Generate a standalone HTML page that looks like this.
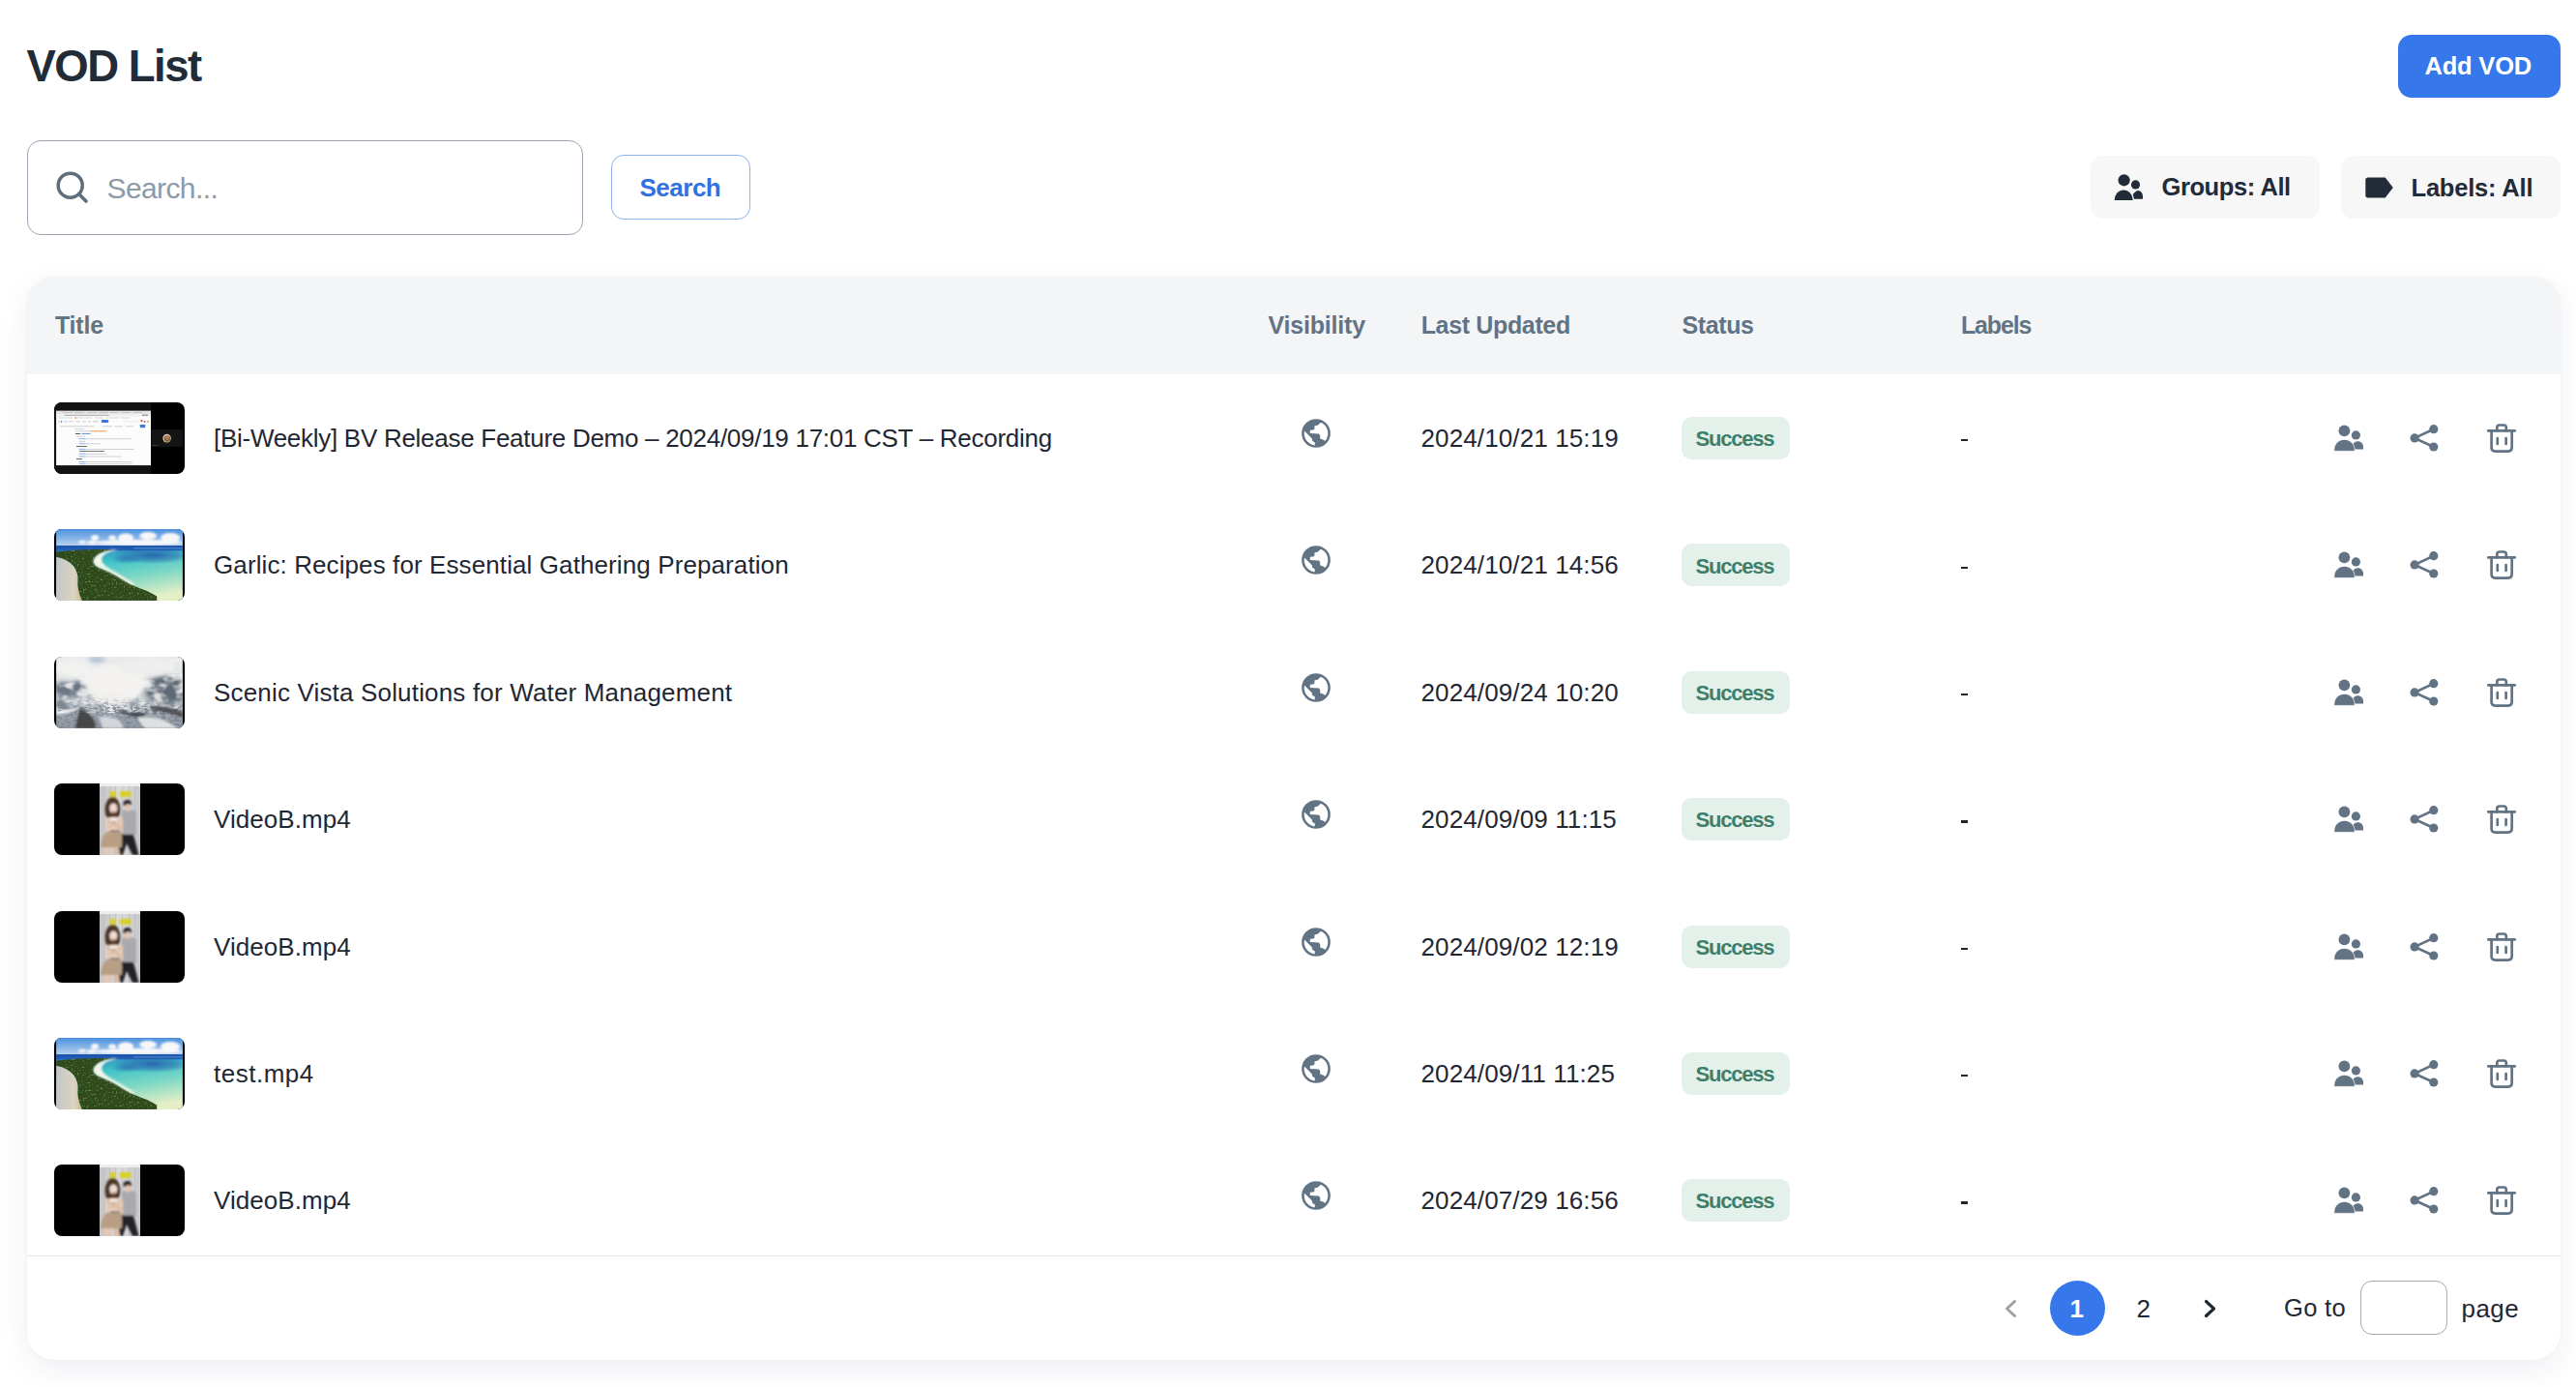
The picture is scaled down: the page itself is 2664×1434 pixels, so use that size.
<!DOCTYPE html>
<html><head><meta charset="utf-8"><title>VOD List</title>
<style>
html,body{margin:0;padding:0;}
body{width:2664px;height:1434px;position:relative;overflow:hidden;background:#ffffff;font-family:"Liberation Sans",sans-serif;}
.t{position:absolute;white-space:pre;}
.box{position:absolute;}
.card{box-shadow:0 10px 30px rgba(30,45,90,0.075), 0 0 2px rgba(30,45,90,0.05);}
</style></head><body>

<svg width="0" height="0" style="position:absolute">
<defs>
 <clipPath id="tclip"><rect x="0" y="0" width="135" height="74" rx="8" ry="8"/></clipPath>
 <clipPath id="gin"><circle cx="16" cy="16" r="12.3"/></clipPath>
 <g id="globe">
   <circle cx="16" cy="16" r="14.85" fill="#627384"/>
   <g clip-path="url(#gin)" fill="#ffffff">
     <path d="M20.2 5.2 L18.6 7 L16.8 7.9 L14.5 8.2 L14.4 11.6 L13.2 12.5 L9.8 12.8 L9.8 16.1 L18.9 16.4 L20.2 18.2 L20.2 21.6 L23.8 22.8 L25.3 24 L31 20 L31 2 Z"/>
     <path d="M3.9 13.4 L10.2 19.8 L11.7 21.3 L12.3 24 L14.7 25.2 L14.8 27.9 L14.8 33 L0 33 L0 13 Z"/>
   </g>
 </g>
 <g id="actions" fill="#627384">
   <!-- group icon; origin x=2400, y=rowtop+40 -->
   <circle cx="24.4" cy="5.3" r="5.9"/>
   <circle cx="36.4" cy="9.9" r="4.6"/>
   <path d="M32.9 24.6 L44 24.6 L44 22 C44 18.5 41.5 16.2 38.5 16.2 C35.5 16.2 33 18.5 32.9 20.5 Z"/>
   <path d="M13.9 26.4 L35.1 26.4 L35.1 24.8 C35.1 19 30.5 14.4 24.5 14.4 C18.5 14.4 13.9 19 13.9 24.8 Z" stroke="#fff" stroke-width="0.7"/>
   <!-- share icon -->
   <g>
     <circle cx="116.8" cy="3.7" r="4.6"/>
     <circle cx="97.1" cy="12.9" r="4.6"/>
     <circle cx="116.8" cy="22" r="4.6"/>
     <polyline points="116.8,3.7 97.1,12.9 116.8,22" fill="none" stroke="#627384" stroke-width="2.7"/>
   </g>
   <!-- trash icon -->
   <g fill="none" stroke="#627384" stroke-width="2.7" stroke-linecap="round" stroke-linejoin="round">
     <line x1="173.3" y1="5.4" x2="200.7" y2="5.4"/>
     <path d="M182.3 5.4 L182.3 2 Q182.3 -0.5 184.8 -0.5 L189.3 -0.5 Q191.8 -0.5 191.8 2 L191.8 5.4"/>
     <path d="M176.6 5.4 L176.6 22.8 Q176.6 26.6 180.5 26.6 L193.9 26.6 Q197.7 26.6 197.7 22.8 L197.7 5.4"/>
     <line x1="182.8" y1="13" x2="182.8" y2="19"/>
     <line x1="191.6" y1="13" x2="191.6" y2="19"/>
   </g>
 </g>

 <g id="th-rec" clip-path="url(#tclip)">
   <rect width="135" height="74" fill="#000"/>
   <rect width="100" height="74" fill="#121212"/>
   <rect x="2.1" y="8.8" width="97.9" height="56.3" fill="#fcfcfc"/>
   <rect x="2.1" y="8.8" width="97.9" height="3.2" fill="#e6e4e2"/>
   <g fill="#c4c6ca"><rect x="9" y="10" width="10" height="1"/><rect x="21" y="10" width="10" height="1"/><rect x="34" y="10" width="10" height="1"/><rect x="46" y="10" width="10" height="1"/><rect x="58" y="10" width="8" height="1"/><rect x="70" y="10" width="9" height="1"/><rect x="82" y="10" width="9" height="1"/></g>
   <rect x="2.1" y="12" width="97.9" height="2.7" fill="#f0f0f0"/>
   <rect x="10.7" y="12.7" width="46" height="1.3" fill="#b9bbbf"/>
   <rect x="91" y="12.5" width="6" height="1.5" fill="#9a9c9f"/>
   <g fill="#d4d6d9"><rect x="4" y="15.5" width="6" height="1"/><rect x="11" y="15.5" width="8" height="1"/><rect x="21" y="15.5" width="9" height="1"/><rect x="31" y="15.5" width="8" height="1"/><rect x="42" y="15.5" width="9" height="1"/><rect x="54" y="15.5" width="12" height="1"/><rect x="68" y="15.5" width="10" height="1"/></g>
   <rect x="21.5" y="15.2" width="1.3" height="1.6" fill="#f08a3c"/>
   <g fill="#c9cbcf"><rect x="4" y="19.3" width="2" height="1.3"/><rect x="10" y="19.3" width="4" height="1"/><rect x="15" y="19.3" width="5" height="1"/><rect x="22" y="19.3" width="5" height="1"/><rect x="29" y="19.3" width="4" height="1"/><rect x="35" y="19.3" width="3" height="1"/><rect x="40" y="19.3" width="6" height="1"/></g>
   <rect x="7" y="19" width="1.2" height="1.8" fill="#4a7fe0"/>
   <rect x="48.8" y="18.1" width="7.5" height="3" rx="1" fill="#3a78e0"/>
   <rect x="71.5" y="18.4" width="16.5" height="2.4" fill="#f2f3f4"/>
   <circle cx="90.4" cy="19" r="1.1" fill="#e03a3a"/>
   <circle cx="93.6" cy="19.8" r="0.9" fill="#53627a"/>
   <circle cx="97.1" cy="19.7" r="1" fill="#f09a28"/>
   <g fill="#cfd1d4"><rect x="6" y="24.3" width="35" height="1"/><rect x="50" y="24.3" width="10" height="1"/><rect x="62" y="24.3" width="9" height="1"/><rect x="74" y="24.3" width="8" height="1"/></g>
   <rect x="88.8" y="23" width="5.4" height="3.2" rx="0.6" fill="#3a78e0"/>
   <g fill="#cdd0d4">
     <rect x="21" y="27.2" width="10" height="0.8"/>
     <rect x="22" y="29.3" width="15" height="1"/>
     <rect x="22" y="32" width="5" height="1" fill="#555"/>
     <rect x="23" y="34.6" width="9" height="1"/>
     <rect x="32.6" y="37.3" width="47" height="1"/>
     <rect x="26" y="39.9" width="6" height="1"/>
     <rect x="32.6" y="42.3" width="15" height="1"/>
     <rect x="23" y="45" width="11" height="1" fill="#666"/>
     <rect x="32.6" y="48" width="50" height="1"/>
     <rect x="26" y="50" width="26" height="1" fill="#777"/>
     <rect x="32.6" y="52.8" width="22" height="1"/>
     <rect x="32.6" y="55.5" width="37" height="1"/>
     <rect x="23" y="58.1" width="6" height="1" fill="#666"/>
     <rect x="32.6" y="61.1" width="48" height="1"/>
     <rect x="32.6" y="63.3" width="48" height="1"/>
   </g>
   <rect x="37.4" y="29.2" width="16.5" height="1.1" fill="#f0a060"/>
   <rect x="28.3" y="31.9" width="9.3" height="1" fill="#5a8fe0"/>
   <g fill="#8fb0ea"><rect x="25.6" y="37.2" width="7" height="1"/><rect x="25.6" y="42.2" width="7" height="1"/><rect x="25.6" y="47.9" width="7" height="1"/><rect x="25.6" y="52.7" width="7" height="1"/><rect x="25.6" y="55.4" width="7" height="1"/><rect x="25.6" y="61" width="7" height="1"/><rect x="25.6" y="63.2" width="7" height="1"/></g>
   <rect x="100.3" y="28" width="32.6" height="17.9" fill="#141414"/>
   <circle cx="116.6" cy="37.1" r="4.3" fill="#d8cbb4"/>
   <circle cx="116.9" cy="37.6" r="3.3" fill="#8a6238"/>
   <circle cx="116.9" cy="36.6" r="2.2" fill="#a98058"/>
   <rect x="101" y="44.2" width="7" height="0.8" fill="#3a3a3a"/>
 </g>
 <linearGradient id="sky" x1="0" y1="0" x2="0" y2="1"><stop offset="0" stop-color="#4b90de"/><stop offset="1" stop-color="#b9d3ef"/></linearGradient>
 <linearGradient id="ocean" x1="0" y1="0" x2="0" y2="1"><stop offset="0" stop-color="#1a4fa8"/><stop offset="1" stop-color="#2363b8"/></linearGradient>
 <linearGradient id="lag" x1="0.3" y1="0" x2="0.6" y2="1"><stop offset="0" stop-color="#2a62b2"/><stop offset="0.22" stop-color="#2d7bbd"/><stop offset="0.45" stop-color="#3fc4c8"/><stop offset="0.7" stop-color="#7fd8c4"/><stop offset="1" stop-color="#e4efc6"/></linearGradient>
 <radialGradient id="lagdeep" cx="0.5" cy="0.5" r="0.5"><stop offset="0" stop-color="#2458aa" stop-opacity="0.85"/><stop offset="0.6" stop-color="#2a64b0" stop-opacity="0.5"/><stop offset="1" stop-color="#2a64b0" stop-opacity="0"/></radialGradient>
 <linearGradient id="sand" x1="0" y1="0" x2="1" y2="0"><stop offset="0" stop-color="#c6c6c4"/><stop offset="0.7" stop-color="#d9d4c2"/><stop offset="1" stop-color="#cdb888"/></linearGradient>
 <filter id="forestn" x="0" y="0" width="100%" height="100%">
   <feTurbulence type="fractalNoise" baseFrequency="0.5" numOctaves="2" seed="5" result="n"/>
   <feColorMatrix in="n" type="matrix" values="0 0 0 0 0.30  0 0 0 0 0.42  0 0 0 0 0.20  3 0 0 0 -1.75" result="d"/>
   <feGaussianBlur in="d" stdDeviation="0.35" result="db"/>
   <feComposite in="db" in2="SourceGraphic" operator="in"/>
 </filter>
 <filter id="bl1" x="-20%" y="-20%" width="140%" height="140%"><feGaussianBlur stdDeviation="0.9"/></filter>
 <filter id="bl2" x="-30%" y="-30%" width="160%" height="160%"><feGaussianBlur stdDeviation="2.2"/></filter>
 <g id="th-beach" clip-path="url(#tclip)">
   <rect width="135" height="74" fill="#000"/>
   <g transform="translate(2.1 0)">
   <svg x="0" y="0" width="130.8" height="74" overflow="hidden">
   <rect width="131" height="74" fill="url(#lag)"/>
   <ellipse cx="100" cy="27" rx="42" ry="9" fill="url(#lagdeep)"/><ellipse cx="72" cy="31" rx="16" ry="5" fill="url(#lagdeep)" opacity="0.6"/>
   <rect width="131" height="17.5" fill="url(#sky)"/>
   <g fill="#f6f7f9" filter="url(#bl1)">
     <ellipse cx="40" cy="9" rx="4" ry="3"/>
     <ellipse cx="27" cy="13.5" rx="4" ry="1.8"/>
     <ellipse cx="37" cy="14" rx="5" ry="2"/>
     <ellipse cx="58" cy="9" rx="4" ry="2.5"/>
     <ellipse cx="72" cy="9" rx="8" ry="4.5"/>
     <ellipse cx="95" cy="7" rx="9" ry="4"/>
     <ellipse cx="118" cy="9" rx="10" ry="5"/>
     <ellipse cx="85" cy="14" rx="45" ry="3"/>
   </g>
   <rect y="17.1" width="131" height="5.3" fill="url(#ocean)"/>
   <rect x="80" y="19.4" width="51" height="0.9" fill="#6fa9d8" opacity="0.7"/>
   <path d="M0 28.8 Q11 30.5 18.2 38.4 Q23.5 46.4 22.4 53.4 Q21.4 61.4 26.7 74 L0 74 Z" fill="url(#sand)"/>
   <path d="M0 23.5 Q30 20.5 59.3 21.2 Q51 22.5 45.9 25 Q39 28.5 38.5 33.5 Q39.5 38.5 45.9 40.6 Q55 44 61.9 48 Q70 53 77.9 57.6 Q87 62 93.9 64 Q100 67 104.1 69.4 L104.1 74 L26.7 74 Q21.4 61.4 22.4 53.4 Q23.5 46.4 18.2 38.4 Q11 30.5 0 28.8 Z" fill="#2f4a1b"/>
   <path d="M0 23.5 Q30 20.5 59.3 21.2 Q51 22.5 45.9 25 Q39 28.5 38.5 33.5 Q39.5 38.5 45.9 40.6 Q55 44 61.9 48 Q70 53 77.9 57.6 Q87 62 93.9 64 Q100 67 104.1 69.4 L104.1 74 L26.7 74 Q21.4 61.4 22.4 53.4 Q23.5 46.4 18.2 38.4 Q11 30.5 0 28.8 Z" fill="#fff" filter="url(#forestn)"/>
   <path d="M59.3 21.2 Q51 22.5 45.9 25 Q39 28.5 38.5 33.5 Q39.5 38.5 45.9 40.6 Q55 44 61.9 48 Q70 53 77.9 57.6 L82 57 Q72 51 64 46 Q52 40 48 35 Q45 29 52 25 Q57 22.5 64 21.5 Z" fill="#f7f5e8" filter="url(#bl1)"/>
   </svg>
   </g>
 </g>
 <filter id="rockn" x="0" y="0" width="100%" height="100%">
   <feTurbulence type="fractalNoise" baseFrequency="0.22 0.4" numOctaves="3" seed="11" result="n"/>
   <feColorMatrix in="n" type="matrix" values="0 0 0 0 0.22  0 0 0 0 0.24  0 0 0 0 0.28  5 0 0 0 -2.3" result="dark"/>
   <feComposite in="dark" in2="SourceGraphic" operator="in"/>
 </filter>
 <filter id="cloudn" x="0" y="0" width="100%" height="100%">
   <feTurbulence type="fractalNoise" baseFrequency="0.08 0.12" numOctaves="2" seed="4" result="n"/>
   <feColorMatrix in="n" type="matrix" values="0 0 0 0 0.96  0 0 0 0 0.96  0 0 0 0 0.95  3.2 0 0 0 -1.2" result="w"/>
   <feComposite in="w" in2="SourceGraphic" operator="in"/>
 </filter>
 <linearGradient id="fadeDown" x1="0" y1="0" x2="0" y2="1"><stop offset="0" stop-color="#fff" stop-opacity="0"/><stop offset="0.35" stop-color="#fff" stop-opacity="1"/></linearGradient>
 <linearGradient id="mtbase" x1="0" y1="0" x2="0" y2="1"><stop offset="0" stop-color="#e9eaeb"/><stop offset="0.45" stop-color="#d5d9de"/><stop offset="0.7" stop-color="#aab2bb"/><stop offset="1" stop-color="#8b95a0"/></linearGradient>
 <g id="th-mount" clip-path="url(#tclip)">
   <rect width="135" height="74" fill="#000"/>
   <svg x="2.1" y="0" width="130.8" height="74" overflow="hidden">
   <rect width="131" height="74" fill="url(#mtbase)"/>
   <g filter="url(#bl2)">
     <ellipse cx="20" cy="33" rx="24" ry="8" fill="#6a7684"/>
     <ellipse cx="114" cy="34" rx="22" ry="14" fill="#5e6976"/>
     <ellipse cx="8" cy="48" rx="10" ry="8" fill="#7d8894"/>
     <ellipse cx="42" cy="3" rx="9" ry="2.5" fill="#a3b8cf"/>
   </g>
   <rect x="0" y="18" width="131" height="40" fill="#fff" filter="url(#cloudn)" opacity="0.8"/>
   <g filter="url(#bl2)">
     <ellipse cx="60" cy="26" rx="32" ry="19" fill="#f3f2f0"/>
     <ellipse cx="18" cy="12" rx="20" ry="10" fill="#f1f1f0"/>
     <ellipse cx="95" cy="10" rx="30" ry="9" fill="#eeeeed"/>
     <ellipse cx="58" cy="44" rx="20" ry="6" fill="#f0efed"/>
   </g>
   <rect x="0" y="42" width="131" height="32" fill="url(#fadeDown)" filter="url(#rockn)"/>
   <g filter="url(#bl1)">
     <path d="M0 57 Q12 54 24 53 Q20 56 10 58 Q4 59 0 60 Z" fill="#f4f5f6"/>
     <path d="M24 53 Q32 56 38 64 Q42 70 40 74 L20 74 Q22 64 24 53 Z" fill="#3b3936" opacity="0.85"/>
     <path d="M60 53 Q70 56 76 58 Q86 56 94 60 Q88 63 80 62 Q70 60 60 53 Z" fill="#3a3c42" opacity="0.85"/>
     <path d="M96 51 Q110 50 124 54 L131 58 L131 63 Q118 58 100 56 Z" fill="#45464a" opacity="0.85"/>
     <path d="M84 63 Q100 61 112 66 Q120 70 126 74 L92 74 Q86 68 84 63 Z" fill="#eceeef" opacity="0.85"/>
     <path d="M44 62 Q55 60 66 66 L70 74 L48 74 Z" fill="#e8eaec" opacity="0.75"/>
     <ellipse cx="118" cy="48" rx="5" ry="1.3" fill="#3f6a55" opacity="0.6"/>
   </g>
   <rect x="119" y="4" width="9" height="12" rx="2" fill="none" stroke="#f4f6f8" stroke-width="0.9"/>
   </svg>
 </g>
 <linearGradient id="curt" x1="0" y1="0" x2="1" y2="0"><stop offset="0" stop-color="#c4c4c8"/><stop offset="0.5" stop-color="#dcdcdf"/><stop offset="1" stop-color="#c8c8cc"/></linearGradient>
 <g id="th-ppl" clip-path="url(#tclip)">
   <rect width="135" height="74" fill="#000"/>
   <svg x="46.9" y="0" width="42.1" height="74" overflow="hidden">
   <rect width="42.1" height="74" fill="url(#curt)"/>
   <rect width="42.1" height="3" fill="#ededee"/>
   <g fill="#bdbdc1" opacity="0.7"><rect x="4" y="3" width="1.2" height="71"/><rect x="10" y="3" width="1.2" height="71"/><rect x="16" y="3" width="1.2" height="71"/><rect x="23" y="3" width="1.2" height="71"/><rect x="30" y="3" width="1.2" height="71"/><rect x="36" y="3" width="1.2" height="71"/></g>
   <g filter="url(#bl1)" transform="translate(-6.9 0)">
   <rect x="17.6" y="8" width="5.9" height="5.9" fill="#d8d02a"/>
   <rect x="27.7" y="8" width="12" height="5.9" fill="#d8d02a"/>
   <path d="M30 28 Q37 25 44.8 28.5 L45 53.3 L29 53.3 Z" fill="#a9aaaf"/>
   <ellipse cx="35.7" cy="20.8" rx="4.2" ry="3.8" fill="#27272b"/>
   <ellipse cx="36.3" cy="24.8" rx="3.3" ry="3.6" fill="#e6c7b6"/>
   <ellipse cx="20.5" cy="27" rx="8" ry="13" fill="#4e3628"/>
   <ellipse cx="21.3" cy="25.6" rx="4" ry="5" fill="#efdcd2"/>
   <circle cx="21.6" cy="29.2" r="1" fill="#c0303a"/>
   <path d="M13.3 36 Q22 33 31 36 L31 51 L14 51 Z" fill="#e9cfbc"/>
   <rect x="18" y="36" width="7" height="4" fill="#f2f0ee"/>
   <rect x="18" y="39" width="7" height="1.3" fill="#3e4a6a"/>
   <path d="M14 44 L30 36 L32 39 L16 47 Z" fill="#e2c4ae"/>
   <path d="M16 37 L31 45 L29 48 L14 40 Z" fill="#dcbca6"/>
   <rect x="18" y="48.5" width="10" height="1.6" fill="#3e4a6a"/>
   <path d="M27.7 52.8 L42 52.8 L47.5 74 L41 74 L35 62 L31 74 L25 74 Z" fill="#222226"/>
   <path d="M7.5 66 Q10 52 15 49.6 L29 49.6 Q31 56 30 66 Z" fill="#b89e84"/>
   <path d="M11 66 L19 66 L19 74 L10 74 Z" fill="#e2c8b6"/>
   <path d="M21 66 L27 66 L28 74 L22 74 Z" fill="#d9bdaa"/>
   </g>
   </svg>
 </g>
</defs>
</svg>

<div class="t" style="left:27.50px;top:45.58px;font-size:45.5px;line-height:45.5px;color:#222b38;font-weight:700;letter-spacing:-1.5px;">VOD List</div>
<div class="box" style="left:2480px;top:36px;width:168px;height:65px;border-radius:14px;background:#3677eb"></div>
<div class="t" style="left:2507.50px;top:56.31px;font-size:25.5px;line-height:25.5px;color:#ffffff;font-weight:700;letter-spacing:-0.2px;">Add VOD</div>
<div class="box" style="left:28px;top:145px;width:575px;height:97.5px;border-radius:14px;border:1.5px solid #9ba6b2;box-sizing:border-box;background:#fff"></div>
<svg class="box" style="left:50px;top:170px" width="50" height="50" viewBox="0 0 50 50"><circle cx="22.7" cy="21.65" r="12.5" fill="none" stroke="#5f6e7c" stroke-width="3.5"/><line x1="31.8" y1="30.8" x2="39" y2="38" stroke="#5f6e7c" stroke-width="3.6" stroke-linecap="round"/></svg>
<div class="t" style="left:110.50px;top:179.50px;font-size:30px;line-height:30px;color:#8d9aa7;font-weight:400;letter-spacing:-0.6px;">Search...</div>
<div class="box" style="left:632px;top:160px;width:143.5px;height:66.5px;border-radius:13px;border:1.5px solid #8db3f6;box-sizing:border-box;background:#fff"></div>
<div class="t" style="left:661.50px;top:180.79px;font-size:26px;line-height:26px;color:#3172e0;font-weight:700;letter-spacing:-0.5px;">Search</div>
<div class="box" style="left:2162px;top:161px;width:236.5px;height:65px;border-radius:13px;background:#f7f7f8"></div>
<svg class="box" style="left:2180px;top:174px" width="44" height="40" viewBox="0 0 44 40"><circle cx="16.6" cy="12.3" r="6.1" fill="#222b38"/><circle cx="28.5" cy="16.9" r="4.6" fill="#222b38"/><path d="M24.5 31.7 C24.5 26.5 29 23 31 23 C34 23 36 26 36 29 L36 31.7 Z" fill="#222b38"/><path d="M6 33.5 C6 27 10.5 21.8 16.2 21.8 C21.8 21.8 26.4 27 26.4 33.5 Z" fill="#222b38" stroke="#f5f5f6" stroke-width="1.2"/></svg>
<div class="t" style="left:2235.50px;top:181.41px;font-size:25.5px;line-height:25.5px;color:#222b38;font-weight:700;letter-spacing:-0.42px;">Groups: All</div>
<div class="box" style="left:2421px;top:161px;width:226.6px;height:65px;border-radius:13px;background:#f7f7f8"></div>
<svg class="box" style="left:2440px;top:178px" width="40" height="32" viewBox="0 0 40 32"><path d="M9 5.5 L26.7 5.5 L34.8 16 L26.7 26.4 L9 26.4 Q6.3 26.4 6.3 23.7 L6.3 8.2 Q6.3 5.5 9 5.5 Z" fill="#222b38"/></svg>
<div class="t" style="left:2493.50px;top:181.61px;font-size:25.5px;line-height:25.5px;color:#222b38;font-weight:700;letter-spacing:-0.2px;">Labels: All</div>
<div class="box card" style="left:28px;top:286px;width:2620px;height:1120px;border-radius:28px;background:#fff"></div>
<div class="box" style="left:28px;top:286px;width:2620px;height:101px;border-radius:28px 28px 0 0;background:#f4f5f7"></div>
<div class="t" style="left:57.00px;top:323.94px;font-size:25px;line-height:25px;color:#627384;font-weight:700;letter-spacing:-0.2px;">Title</div>
<div class="t" style="left:1311.50px;top:323.94px;font-size:25px;line-height:25px;color:#627384;font-weight:700;letter-spacing:-0.2px;">Visibility</div>
<div class="t" style="left:1469.70px;top:323.94px;font-size:25px;line-height:25px;color:#627384;font-weight:700;letter-spacing:-0.35px;">Last Updated</div>
<div class="t" style="left:1739.50px;top:323.94px;font-size:25px;line-height:25px;color:#627384;font-weight:700;letter-spacing:-0.4px;">Status</div>
<div class="t" style="left:2028.00px;top:323.94px;font-size:25px;line-height:25px;color:#627384;font-weight:700;letter-spacing:-1.15px;">Labels</div>
<div class="box" style="left:28px;top:387px;width:2620px;height:911px;overflow:hidden">
<svg class="box" style="left:28px;top:29.00px" width="135" height="74"><use href="#th-rec"/></svg>
<div class="t" style="left:193.00px;top:52.99px;font-size:26px;line-height:26px;color:#1f2733;font-weight:400;letter-spacing:-0.28px;">[Bi-Weekly] BV Release Feature Demo – 2024/09/19 17:01 CST – Recording</div>
<svg class="box" style="left:1317px;top:45.00px" width="32" height="32"><use href="#globe"/></svg>
<div class="t" style="left:1441.50px;top:52.99px;font-size:26px;line-height:26px;color:#1f2733;font-weight:400;letter-spacing:0.12px;">2024/10/21 15:19</div>
<div class="box" style="left:1711px;top:44.00px;width:112px;height:44px;border-radius:10px;background:#e3f1ea"></div>
<div class="t" style="left:1725.50px;top:56.18px;font-size:22px;line-height:22px;color:#3e7f6a;font-weight:700;letter-spacing:-1.2px;">Success</div>
<div class="box" style="left:2000.3px;top:67.20px;width:6.5px;height:2.2px;background:#1f2733"></div>
<svg class="box" style="left:2372px;top:53.00px;overflow:visible" width="240" height="40"><use href="#actions"/></svg>
<svg class="box" style="left:28px;top:160.38px" width="135" height="74"><use href="#th-beach"/></svg>
<div class="t" style="left:193.00px;top:184.37px;font-size:26px;line-height:26px;color:#1f2733;font-weight:400;letter-spacing:0.1px;">Garlic: Recipes for Essential Gathering Preparation</div>
<svg class="box" style="left:1317px;top:176.38px" width="32" height="32"><use href="#globe"/></svg>
<div class="t" style="left:1441.50px;top:184.37px;font-size:26px;line-height:26px;color:#1f2733;font-weight:400;letter-spacing:0.12px;">2024/10/21 14:56</div>
<div class="box" style="left:1711px;top:175.38px;width:112px;height:44px;border-radius:10px;background:#e3f1ea"></div>
<div class="t" style="left:1725.50px;top:187.56px;font-size:22px;line-height:22px;color:#3e7f6a;font-weight:700;letter-spacing:-1.2px;">Success</div>
<div class="box" style="left:2000.3px;top:198.58px;width:6.5px;height:2.2px;background:#1f2733"></div>
<svg class="box" style="left:2372px;top:184.38px;overflow:visible" width="240" height="40"><use href="#actions"/></svg>
<svg class="box" style="left:28px;top:291.76px" width="135" height="74"><use href="#th-mount"/></svg>
<div class="t" style="left:193.00px;top:315.75px;font-size:26px;line-height:26px;color:#1f2733;font-weight:400;letter-spacing:0.17px;">Scenic Vista Solutions for Water Management</div>
<svg class="box" style="left:1317px;top:307.76px" width="32" height="32"><use href="#globe"/></svg>
<div class="t" style="left:1441.50px;top:315.75px;font-size:26px;line-height:26px;color:#1f2733;font-weight:400;letter-spacing:0.12px;">2024/09/24 10:20</div>
<div class="box" style="left:1711px;top:306.76px;width:112px;height:44px;border-radius:10px;background:#e3f1ea"></div>
<div class="t" style="left:1725.50px;top:318.94px;font-size:22px;line-height:22px;color:#3e7f6a;font-weight:700;letter-spacing:-1.2px;">Success</div>
<div class="box" style="left:2000.3px;top:329.96px;width:6.5px;height:2.2px;background:#1f2733"></div>
<svg class="box" style="left:2372px;top:315.76px;overflow:visible" width="240" height="40"><use href="#actions"/></svg>
<svg class="box" style="left:28px;top:423.14px" width="135" height="74"><use href="#th-ppl"/></svg>
<div class="t" style="left:193.00px;top:447.13px;font-size:26px;line-height:26px;color:#1f2733;font-weight:400;letter-spacing:0.05px;">VideoB.mp4</div>
<svg class="box" style="left:1317px;top:439.14px" width="32" height="32"><use href="#globe"/></svg>
<div class="t" style="left:1441.50px;top:447.13px;font-size:26px;line-height:26px;color:#1f2733;font-weight:400;letter-spacing:0.12px;">2024/09/09 11:15</div>
<div class="box" style="left:1711px;top:438.14px;width:112px;height:44px;border-radius:10px;background:#e3f1ea"></div>
<div class="t" style="left:1725.50px;top:450.32px;font-size:22px;line-height:22px;color:#3e7f6a;font-weight:700;letter-spacing:-1.2px;">Success</div>
<div class="box" style="left:2000.3px;top:461.34px;width:6.5px;height:2.2px;background:#1f2733"></div>
<svg class="box" style="left:2372px;top:447.14px;overflow:visible" width="240" height="40"><use href="#actions"/></svg>
<svg class="box" style="left:28px;top:554.52px" width="135" height="74"><use href="#th-ppl"/></svg>
<div class="t" style="left:193.00px;top:578.51px;font-size:26px;line-height:26px;color:#1f2733;font-weight:400;letter-spacing:0.05px;">VideoB.mp4</div>
<svg class="box" style="left:1317px;top:570.52px" width="32" height="32"><use href="#globe"/></svg>
<div class="t" style="left:1441.50px;top:578.51px;font-size:26px;line-height:26px;color:#1f2733;font-weight:400;letter-spacing:0.12px;">2024/09/02 12:19</div>
<div class="box" style="left:1711px;top:569.52px;width:112px;height:44px;border-radius:10px;background:#e3f1ea"></div>
<div class="t" style="left:1725.50px;top:581.70px;font-size:22px;line-height:22px;color:#3e7f6a;font-weight:700;letter-spacing:-1.2px;">Success</div>
<div class="box" style="left:2000.3px;top:592.72px;width:6.5px;height:2.2px;background:#1f2733"></div>
<svg class="box" style="left:2372px;top:578.52px;overflow:visible" width="240" height="40"><use href="#actions"/></svg>
<svg class="box" style="left:28px;top:685.90px" width="135" height="74"><use href="#th-beach"/></svg>
<div class="t" style="left:193.00px;top:709.89px;font-size:26px;line-height:26px;color:#1f2733;font-weight:400;letter-spacing:0.5px;">test.mp4</div>
<svg class="box" style="left:1317px;top:701.90px" width="32" height="32"><use href="#globe"/></svg>
<div class="t" style="left:1441.50px;top:709.89px;font-size:26px;line-height:26px;color:#1f2733;font-weight:400;letter-spacing:0.12px;">2024/09/11 11:25</div>
<div class="box" style="left:1711px;top:700.90px;width:112px;height:44px;border-radius:10px;background:#e3f1ea"></div>
<div class="t" style="left:1725.50px;top:713.08px;font-size:22px;line-height:22px;color:#3e7f6a;font-weight:700;letter-spacing:-1.2px;">Success</div>
<div class="box" style="left:2000.3px;top:724.10px;width:6.5px;height:2.2px;background:#1f2733"></div>
<svg class="box" style="left:2372px;top:709.90px;overflow:visible" width="240" height="40"><use href="#actions"/></svg>
<svg class="box" style="left:28px;top:817.28px" width="135" height="74"><use href="#th-ppl"/></svg>
<div class="t" style="left:193.00px;top:841.27px;font-size:26px;line-height:26px;color:#1f2733;font-weight:400;letter-spacing:0.05px;">VideoB.mp4</div>
<svg class="box" style="left:1317px;top:833.28px" width="32" height="32"><use href="#globe"/></svg>
<div class="t" style="left:1441.50px;top:841.27px;font-size:26px;line-height:26px;color:#1f2733;font-weight:400;letter-spacing:0.12px;">2024/07/29 16:56</div>
<div class="box" style="left:1711px;top:832.28px;width:112px;height:44px;border-radius:10px;background:#e3f1ea"></div>
<div class="t" style="left:1725.50px;top:844.46px;font-size:22px;line-height:22px;color:#3e7f6a;font-weight:700;letter-spacing:-1.2px;">Success</div>
<div class="box" style="left:2000.3px;top:855.48px;width:6.5px;height:2.2px;background:#1f2733"></div>
<svg class="box" style="left:2372px;top:841.28px;overflow:visible" width="240" height="40"><use href="#actions"/></svg>
</div>
<div class="box" style="left:28px;top:1297.5px;width:2620px;height:1.5px;background:#e3e8ee"></div>
<svg class="box" style="left:2066px;top:1338px" width="26" height="30" viewBox="0 0 26 30"><polyline points="17.5,7.5 9.5,15 17.5,22.5" fill="none" stroke="#9aa1a9" stroke-width="3" stroke-linecap="round" stroke-linejoin="round"/></svg>
<div class="box" style="left:2120px;top:1323.8px;width:57px;height:57px;border-radius:50%;background:#3677eb"></div>
<div class="t" style="left:2140.50px;top:1339.99px;font-size:26px;line-height:26px;color:#ffffff;font-weight:700;letter-spacing:0px;">1</div>
<div class="t" style="left:2209.50px;top:1339.99px;font-size:26px;line-height:26px;color:#1f2733;font-weight:400;letter-spacing:0px;">2</div>
<svg class="box" style="left:2272px;top:1338px" width="26" height="30" viewBox="0 0 26 30"><polyline points="9.5,7.5 17.5,15 9.5,22.5" fill="none" stroke="#1f2733" stroke-width="3.2" stroke-linecap="round" stroke-linejoin="round"/></svg>
<div class="t" style="left:2362.00px;top:1340.41px;font-size:25.5px;line-height:25.5px;color:#1f2733;font-weight:400;letter-spacing:0.3px;">Go to</div>
<div class="box" style="left:2441.4px;top:1324.4px;width:89.2px;height:55.2px;border-radius:12px;border:1.5px solid #a3abb5;box-sizing:border-box"></div>
<div class="t" style="left:2545.50px;top:1339.99px;font-size:26px;line-height:26px;color:#1f2733;font-weight:400;letter-spacing:0.45px;">page</div>

</body></html>
